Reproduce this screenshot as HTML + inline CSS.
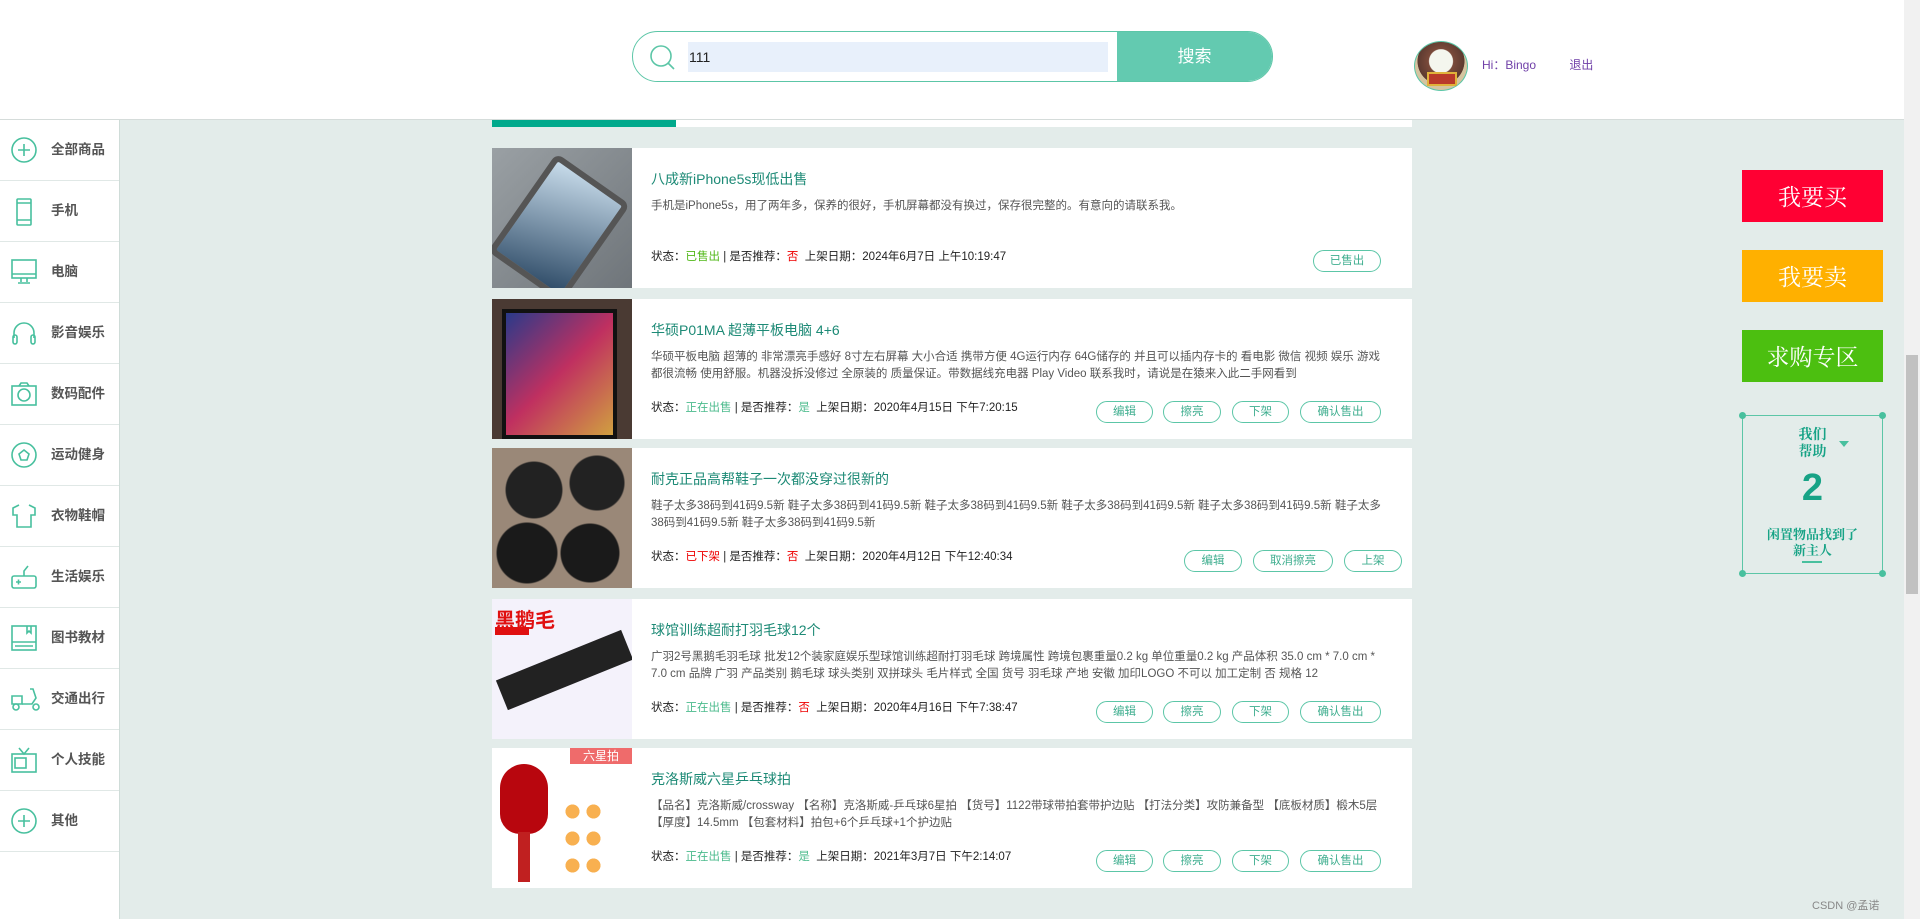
<!DOCTYPE html>
<html><head><meta charset="utf-8">
<style>
*{margin:0;padding:0;box-sizing:border-box}
body{width:1920px;height:919px;overflow:hidden;background:#e3ecea;font-family:"Liberation Sans","Noto Sans CJK SC",sans-serif;position:relative}
.hdr{position:absolute;left:0;top:0;width:1904px;height:120px;background:#fff;border-bottom:1px solid #d5dcda}
.search{position:absolute;left:632px;top:31px;width:641px;height:51px;border:1px solid #5cc6a7;border-radius:26px;overflow:hidden;background:#fff}
.search .inp{position:absolute;left:55px;top:10px;width:420px;height:30px;background:#e8f0fb;font-size:14px;line-height:30px;color:#222;padding-left:1px}
.search .btn{position:absolute;right:0;top:0;width:155px;height:100%;background:#63cab0;color:#fff;font-size:17px;text-align:center;line-height:49px}
.avatar{position:absolute;left:1414px;top:41px;width:54px;height:50px;border-radius:50%;border:1px solid #5cc6a7;background:radial-gradient(circle at 50% 40%,#f4f6ee 30%,#7a4a3a 32%,#5c3a30 60%,#d5c4a0 61%);overflow:hidden}
.avatar:after{content:"";position:absolute;left:12px;top:30px;width:26px;height:10px;background:#b93a2a;border:2px solid #e0b23a}
.hi{position:absolute;left:1482px;top:56px;font-size:12px;color:#7040a8}
.side{position:absolute;left:0;top:120px;width:120px;height:799px;background:#fff;border-right:1px solid #cfdcd8}
.side div{height:61px;border-bottom:1px solid #e0e8e6;position:relative;font-size:13.5px;font-weight:bold;color:#555;line-height:60px;padding-left:51px}
.side svg{position:absolute;left:11px;top:17px}
.tab{position:absolute;left:492px;top:120px;width:920px;height:7px;background:#fff}
.tab i{position:absolute;left:0;top:0;width:184px;height:7px;background:#00a98c}
.card{position:absolute;left:492px;width:920px;height:140px;background:#fff}
.img{position:absolute;left:0;top:0;width:140px;height:140px;overflow:hidden}
.t{position:absolute;left:159px;top:21px;font-size:14px;color:#1d8a76}
.d{position:absolute;left:159px;top:50px;width:740px;font-size:11.5px;color:#555;line-height:17px}
.s{position:absolute;left:159px;top:100px;font-size:11.5px;color:#222}
.g{color:#4cbb8d}.r{color:#e00}.lg{color:#52b81a}
.b{position:absolute;top:102px;height:22px;border:1px solid #5cc6a7;border-radius:11px;font-size:11.5px;color:#3fae8f;text-align:center;line-height:20px}
.rb{position:absolute;left:1742px;width:141px;height:52px;color:#fff;font-family:"Noto Serif CJK SC",serif;font-size:23px;text-align:center;line-height:52px}
.help{position:absolute;left:1742px;top:415px;width:141px;height:159px;border:1px solid #5cc6a7;color:#17a386;font-family:"Noto Serif CJK SC",serif;font-weight:bold;text-align:center}
.dot{position:absolute;width:7px;height:7px;border-radius:50%;background:#48c09e}
.sb{position:absolute;left:1904px;top:0;width:16px;height:919px;background:#f1f1f1}
.sb i{position:absolute;left:2px;top:355px;width:12px;height:239px;background:#c1c1c1}
</style></head><body>
<div class="hdr">
 <div class="search">
  <svg style="position:absolute;left:16px;top:12px" width="28" height="28" viewBox="0 0 28 28" fill="none" stroke="#5cc6a7" stroke-width="1.6"><circle cx="12" cy="12" r="10"/><path d="M19 19l6 6"/></svg>
  <div class="inp">111</div><div class="btn">搜索</div>
 </div>
 <div class="avatar"></div>
 <div class="hi">Hi：Bingo &nbsp;&nbsp;&nbsp;&nbsp;&nbsp;&nbsp;&nbsp;&nbsp;&nbsp;退出</div>
</div>
<div class="side">
 <div><svg width="26" height="26" viewBox="0 0 26 26" fill="none" stroke="#48c09e" stroke-width="1.6"><circle cx="13" cy="13" r="12"/><path d="M13 7v12M7 13h12"/></svg>全部商品</div>
 <div><svg width="26" height="28" viewBox="0 0 26 28" fill="none" stroke="#48c09e" stroke-width="1.6"><rect x="6" y="1" width="14" height="26" rx="1"/><path d="M6 5h14M6 22h14"/></svg>手机</div>
 <div><svg width="26" height="26" viewBox="0 0 26 26" fill="none" stroke="#48c09e" stroke-width="1.6"><rect x="1" y="1" width="24" height="18"/><path d="M1 15h24M10 19v4M16 19v4M7 24h12"/></svg>电脑</div>
 <div><svg width="26" height="26" viewBox="0 0 26 26" fill="none" stroke="#48c09e" stroke-width="1.6"><path d="M3 18v-5a10 10 0 0 1 20 0v5"/><rect x="2" y="15" width="4" height="9" rx="2"/><rect x="20" y="15" width="4" height="9" rx="2"/></svg>影音娱乐</div>
 <div><svg width="26" height="26" viewBox="0 0 26 26" fill="none" stroke="#48c09e" stroke-width="1.6"><rect x="1" y="5" width="24" height="19"/><path d="M8 5l2-3h6l2 3"/><circle cx="13" cy="14" r="6"/></svg>数码配件</div>
 <div><svg width="26" height="26" viewBox="0 0 26 26" fill="none" stroke="#48c09e" stroke-width="1.6"><circle cx="13" cy="13" r="12"/><path d="M13 8l5 4-2 6h-6l-2-6z"/></svg>运动健身</div>
 <div><svg width="26" height="26" viewBox="0 0 26 26" fill="none" stroke="#48c09e" stroke-width="1.6"><path d="M8 2l-6 3v7l4 0v12h14V12h4V5l-6-3"/></svg>衣物鞋帽</div>
 <div><svg width="26" height="26" viewBox="0 0 26 26" fill="none" stroke="#48c09e" stroke-width="1.6"><rect x="1" y="12" width="24" height="12" rx="2"/><path d="M13 12V7l4-5M5 18h5M7.5 15.5v5"/></svg>生活娱乐</div>
 <div><svg width="26" height="26" viewBox="0 0 26 26" fill="none" stroke="#48c09e" stroke-width="1.6"><rect x="1" y="1" width="24" height="24"/><path d="M1 17h24M4 21h18M16 1v7l2-2 2 2V1"/></svg>图书教材</div>
 <div><svg width="30" height="26" viewBox="0 0 30 26" fill="none" stroke="#48c09e" stroke-width="1.6"><path d="M1 10h10v8H1z"/><circle cx="5" cy="21" r="3"/><circle cx="25" cy="21" r="3"/><path d="M11 18h10l4-6-3-9h-3"/></svg>交通出行</div>
 <div><svg width="26" height="26" viewBox="0 0 26 26" fill="none" stroke="#48c09e" stroke-width="1.6"><rect x="1" y="7" width="24" height="18"/><path d="M8 1l5 6 5-6"/><rect x="4" y="11" width="11" height="10"/></svg>个人技能</div>
 <div><svg width="26" height="26" viewBox="0 0 26 26" fill="none" stroke="#48c09e" stroke-width="1.6"><circle cx="13" cy="13" r="12"/><path d="M13 7v12M7 13h12"/></svg>其他</div>
</div>
<div class="tab"><i></i></div>

<div class="card" style="top:148px">
 <div class="img" style="background:linear-gradient(135deg,#9aa0a4,#6f757a)"><div style="position:absolute;left:22px;top:20px;width:90px;height:120px;background:linear-gradient(160deg,#c8dceb,#2d4a66);transform:rotate(35deg);border:6px solid #555;border-radius:8px"></div></div>
 <div class="t">八成新iPhone5s现低出售</div>
 <div class="d">手机是iPhone5s，用了两年多，保养的很好，手机屏幕都没有换过，保存很完整的。有意向的请联系我。</div>
 <div class="s">状态：<span class="lg">已售出</span> | 是否推荐：<span class="r">否</span>&nbsp; 上架日期：2024年6月7日 上午10:19:47</div>
 <div class="b" style="left:821px;width:68px">已售出</div>
</div>
<div class="card" style="top:299px">
 <div class="img" style="background:#4a3a33"><div style="position:absolute;left:10px;top:10px;width:115px;height:130px;background:linear-gradient(135deg,#2a3a8a,#c03060 50%,#d0a040);border:4px solid #111"></div></div>
 <div class="t">华硕P01MA 超薄平板电脑 4+6</div>
 <div class="d">华硕平板电脑 超薄的 非常漂亮手感好 8寸左右屏幕 大小合适 携带方便 4G运行内存 64G储存的 并且可以插内存卡的 看电影 微信 视频 娱乐 游戏都很流畅 使用舒服。机器没拆没修过 全原装的 质量保证。带数据线充电器 Play Video 联系我时，请说是在猿来入此二手网看到</div>
 <div class="s">状态：<span class="g">正在出售</span> | 是否推荐：<span class="g">是</span>&nbsp; 上架日期：2020年4月15日 下午7:20:15</div>
 <div class="b" style="left:604px;width:57px">编辑</div><div class="b" style="left:671px;width:58px">擦亮</div><div class="b" style="left:740px;width:57px">下架</div><div class="b" style="left:808px;width:81px">确认售出</div>
</div>
<div class="card" style="top:448px">
 <div class="img" style="background:radial-gradient(circle at 30% 30%,#222 20%,transparent 21%),radial-gradient(circle at 75% 25%,#222 18%,transparent 19%),radial-gradient(circle at 25% 75%,#1a1a1a 20%,transparent 21%),radial-gradient(circle at 70% 75%,#1a1a1a 20%,transparent 21%),#9a8878"></div>
 <div class="t">耐克正品高帮鞋子一次都没穿过很新的</div>
 <div class="d">鞋子太多38码到41码9.5新 鞋子太多38码到41码9.5新 鞋子太多38码到41码9.5新 鞋子太多38码到41码9.5新 鞋子太多38码到41码9.5新 鞋子太多38码到41码9.5新 鞋子太多38码到41码9.5新</div>
 <div class="s">状态：<span class="r">已下架</span> | 是否推荐：<span class="r">否</span>&nbsp; 上架日期：2020年4月12日 下午12:40:34</div>
 <div class="b" style="left:692px;width:58px">编辑</div><div class="b" style="left:761px;width:80px">取消擦亮</div><div class="b" style="left:852px;width:58px">上架</div>
</div>
<div class="card" style="top:599px">
 <div class="img" style="background:#f4f2fb"><div style="position:absolute;left:3px;top:5px;color:#e01010;font-weight:bold;font-size:20px">黑鹅毛</div><div style="position:absolute;left:3px;top:28px;width:34px;height:8px;background:#e01010"></div><div style="position:absolute;left:5px;top:55px;width:135px;height:32px;background:#222;transform:rotate(-22deg)"></div></div>
 <div class="t">球馆训练超耐打羽毛球12个</div>
 <div class="d">广羽2号黑鹅毛羽毛球 批发12个装家庭娱乐型球馆训练超耐打羽毛球 跨境属性 跨境包裹重量0.2 kg 单位重量0.2 kg 产品体积 35.0 cm * 7.0 cm * 7.0 cm 品牌 广羽 产品类别 鹅毛球 球头类别 双拼球头 毛片样式 全国 货号 羽毛球 产地 安徽 加印LOGO 不可以 加工定制 否 规格 12</div>
 <div class="s">状态：<span class="g">正在出售</span> | 是否推荐：<span class="r">否</span>&nbsp; 上架日期：2020年4月16日 下午7:38:47</div>
 <div class="b" style="left:604px;width:57px">编辑</div><div class="b" style="left:671px;width:58px">擦亮</div><div class="b" style="left:740px;width:57px">下架</div><div class="b" style="left:808px;width:81px">确认售出</div>
</div>
<div class="card" style="top:748px">
 <div class="img" style="background:#fff"><div style="position:absolute;left:78px;top:0;width:62px;height:16px;background:#ef6b6b;color:#fff;font-size:12px;text-align:center;line-height:16px">六星拍</div><div style="position:absolute;left:8px;top:16px;width:48px;height:70px;border-radius:24px 24px 20px 20px;background:#b8060e"></div><div style="position:absolute;left:26px;top:84px;width:12px;height:50px;background:#c02020"></div><div style="position:absolute;left:70px;top:50px;width:42px;height:80px;background:radial-gradient(circle,#f8b050 40%,transparent 42%) 21px 0/21px 27px,radial-gradient(circle,#eee 40%,transparent 42%) 0 0/21px 27px"></div></div>
 <div class="t">克洛斯威六星乒乓球拍</div>
 <div class="d">【品名】克洛斯威/crossway 【名称】克洛斯威-乒乓球6星拍 【货号】1122带球带拍套带护边贴 【打法分类】攻防兼备型 【底板材质】椴木5层 【厚度】14.5mm 【包套材料】拍包+6个乒乓球+1个护边贴</div>
 <div class="s">状态：<span class="g">正在出售</span> | 是否推荐：<span class="g">是</span>&nbsp; 上架日期：2021年3月7日 下午2:14:07</div>
 <div class="b" style="left:604px;width:57px">编辑</div><div class="b" style="left:671px;width:58px">擦亮</div><div class="b" style="left:740px;width:57px">下架</div><div class="b" style="left:808px;width:81px">确认售出</div>
</div>

<div class="rb" style="top:170px;background:#ff0033">我要买</div>
<div class="rb" style="top:250px;background:#ffb000">我要卖</div>
<div class="rb" style="top:330px;background:#4cbf10">求购专区</div>
<div class="help">
 <div class="dot" style="left:-4px;top:-4px"></div><div class="dot" style="right:-4px;top:-4px"></div><div class="dot" style="left:-4px;bottom:-4px"></div><div class="dot" style="right:-4px;bottom:-4px"></div>
 <div style="position:absolute;left:0;width:100%;top:10px;font-size:14px;line-height:17px">我们<br>帮助</div>
 <div style="position:absolute;left:96px;top:25px;width:0;height:0;border-left:5px solid transparent;border-right:5px solid transparent;border-top:6px solid #48c09e"></div>
 <div style="position:absolute;left:0;width:100%;top:52px;font-size:38px;line-height:40px;font-family:'Liberation Sans',sans-serif">2</div>
 <div style="position:absolute;left:0;width:100%;top:110px;font-size:13px;line-height:16px">闲置物品找到了<br>新主人</div>
 <div style="position:absolute;left:59px;top:145px;width:20px;height:2px;background:#48c09e"></div>
</div>
<div style="position:absolute;left:1812px;top:897px;font-size:11px;color:#888">CSDN @孟诺</div>
<div class="sb"><i></i></div>
</body></html>
